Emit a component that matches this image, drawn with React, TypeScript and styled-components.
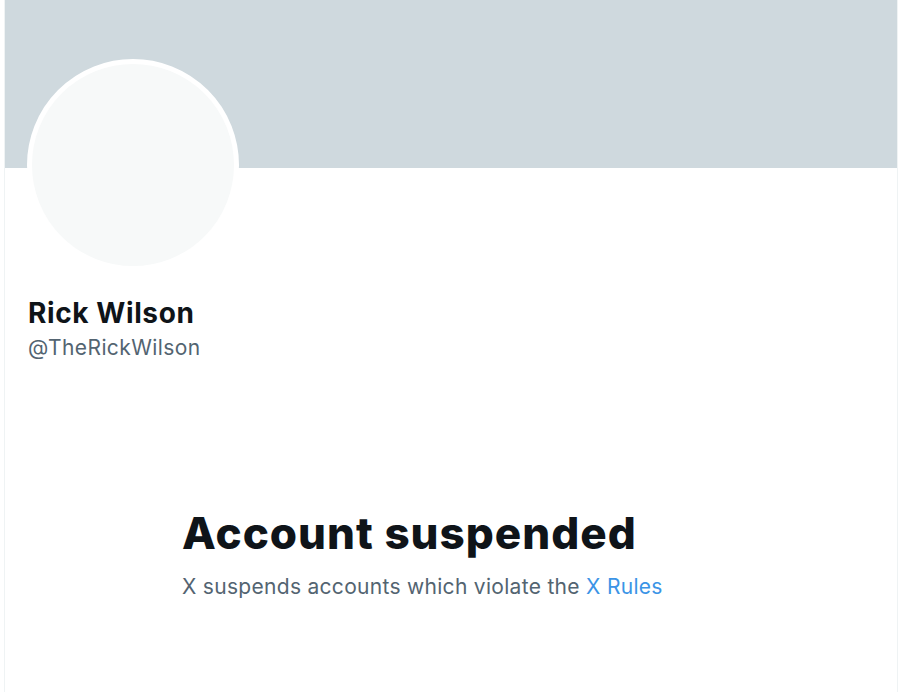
import React from 'react';
import styled, { createGlobalStyle } from 'styled-components';

const GlobalStyle = createGlobalStyle`
    html, body {
        margin: 0;
        padding: 0;
        background: #ffffff;
    }
    body {
        font-family: Inter, "Liberation Sans", sans-serif;
        color: #0f1419;
    }
`;

const Column = styled.main`
    margin-left: 4px;
    width: 894px;
    min-height: 692px;
    border-left: 1px solid #eff3f4;
    border-right: 1px solid #eff3f4;
    box-sizing: border-box;
`;

const Banner = styled.div`
    height: 168px;
    background: #cfd9de;
`;

const ProfileHead = styled.section`
    padding: 0 22px;
`;

const Avatar = styled.div`
    width: 212px;
    height: 212px;
    margin-top: -109px;
    border-radius: 50%;
    border: 5px solid #ffffff;
    background: #f7f9f9;
    box-sizing: border-box;
`;

const Name = styled.h1`
    margin: 24px 0 0 1px;
    font-size: 28px;
    line-height: 36px;
    font-weight: 700;
    letter-spacing: 0.6px;
`;

const Handle = styled.div`
    margin: 3px 0 0 1px;
    font-size: 21px;
    line-height: 28px;
    letter-spacing: 0.4px;
    color: #536471;
`;

const Empty = styled.section`
    width: 538px;
    margin: 145px auto 0;
`;

const Title = styled.h2`
    margin: 0;
    font-size: 44px;
    line-height: 52px;
    font-weight: 800;
    letter-spacing: 1px;
`;

const Text = styled.p`
    margin: 14px 0 0;
    font-size: 21px;
    line-height: 28px;
    letter-spacing: 0.3px;
    color: #536471;
`;

const RulesLink = styled.a`
    color: #3b94e6;
    text-decoration: none;
`;

export default function App() {
    return (
        <>
            <GlobalStyle />
            <Column>
                <Banner />
                <ProfileHead>
                    <Avatar />
                    <Name>Rick Wilson</Name>
                    <Handle>@TheRickWilson</Handle>
                </ProfileHead>
                <Empty>
                    <Title>Account suspended</Title>
                    <Text>
                        X suspends accounts which violate the <RulesLink href="#">X Rules</RulesLink>
                    </Text>
                </Empty>
            </Column>
        </>
    );
}
